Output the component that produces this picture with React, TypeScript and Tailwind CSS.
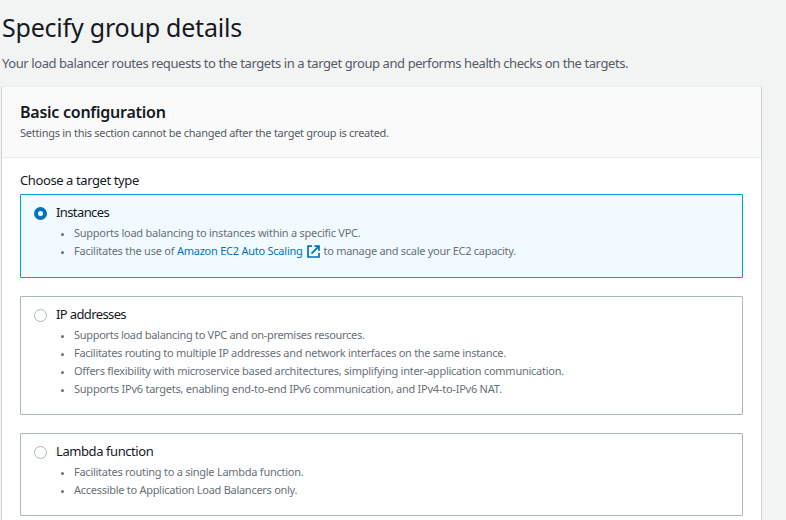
import React from "react";

type Line = { content: React.ReactNode; spacing: string };

function ExternalIcon() {
  return (
    <svg className="mr-[4px] ml-[4px] inline-block h-[13px] w-[13px] align-[-3px]" viewBox="0 0 13 13" fill="none" stroke="#0073bb" strokeWidth="1.7">
      <path d="M5 1.2H1v10.8h11V8" />
      <path d="M7.5 1.2H12v4.5M12 1.2 4.5 8.7" />
    </svg>
  );
}

function Radio({ selected }: { selected?: boolean }) {
  return selected ? (
    <span className="h-[13px] w-[13px] shrink-0 rounded-full border-4 border-[#0073bb] bg-white" />
  ) : (
    <span className="h-[13px] w-[13px] shrink-0 rounded-full border border-[#aab7b8] bg-white" />
  );
}

function Option({ title, titleSpacing, lines, selected, box }: { title: string; titleSpacing: string; lines: Line[]; selected?: boolean; box: string }) {
  return (
    <div className={`rounded-[1px] border pt-[9px] pl-[13px] ${box} ${selected ? "border-[#00a1c9] bg-[#f1faff]" : "border-[#aab7b8] bg-white"}`}>
      <div className="flex h-[18px] items-center gap-[9px]">
        <Radio selected={selected} />
        <span className={`mb-[2px] text-[13px] leading-[18px] whitespace-nowrap ${titleSpacing}`}>{title}</span>
      </div>
      <ul className="mt-[2px] text-[11px] leading-[18px] text-[#687078]">
        {lines.map((line, i) => (
          <li key={i} className="flex h-[18px] items-center pl-[27px] whitespace-nowrap">
            <span className="mt-[2px] mr-[10px] h-[3px] w-[3px] rounded-full bg-[#687078]" />
            <span className={line.spacing}>{line.content}</span>
          </li>
        ))}
      </ul>
    </div>
  );
}

export default function App() {
  return (
    <div className="h-[520px] w-[786px] overflow-hidden bg-[#f2f3f3] font-['Noto_Sans',sans-serif] text-[#16191f]">
      <header className="pt-[9px] pl-[2px] whitespace-nowrap">
        <h1 className="text-[25px] leading-[36px] tracking-[-0.22px]"><span>Specify group details</span></h1>
        <p className="mt-[9px] text-[13px] leading-[18px] tracking-[-0.42px] text-[#545b64]">
          <span>Your load balancer routes requests to the targets in a target group and performs health checks on the targets.</span>
        </p>
      </header>
      <main className="mt-[14px] ml-[1px] h-[440px] w-[761px] border border-[#cfd5d5] border-t-[#eaeded] bg-white">
        <div className="h-[71px] border-b border-[#eaeded] bg-[#fafafa] pt-[14px] pl-[18px] whitespace-nowrap">
          <h2 className="text-[16px] leading-[22px] font-semibold tracking-[-0.25px]"><span>Basic configuration</span></h2>
          <p className="mt-px text-[11px] leading-[18px] tracking-[-0.27px] text-[#545b64]"><span>Settings in this section cannot be changed after the target group is created.</span></p>
        </div>
        <div className="px-[18px] pt-[13px]">
          <p className="mb-[5px] text-[13px] leading-[18px] tracking-[-0.4px]"><span>Choose a target type</span></p>
          <div className="flex flex-col gap-[18px]">
            <Option selected box="h-[84px]" title="Instances" titleSpacing="tracking-[-0.6px]" lines={[
              { content: "Supports load balancing to instances within a specific VPC.", spacing: "tracking-[-0.25px]" },
              { content: <>Facilitates the use of <span className="text-[#0073bb]">Amazon EC2 Auto Scaling</span><ExternalIcon /><span className="tracking-[-0.29px]">to manage and scale your EC2 capacity.</span></>, spacing: "tracking-[-0.24px]" },
            ]} />
            <Option box="h-[119px]" title="IP addresses" titleSpacing="tracking-[-0.62px]" lines={[
              { content: "Supports load balancing to VPC and on-premises resources.", spacing: "tracking-[-0.3px]" },
              { content: "Facilitates routing to multiple IP addresses and network interfaces on the same instance.", spacing: "tracking-[-0.29px]" },
              { content: "Offers flexibility with microservice based architectures, simplifying inter-application communication.", spacing: "tracking-[-0.25px]" },
              { content: "Supports IPv6 targets, enabling end-to-end IPv6 communication, and IPv4-to-IPv6 NAT.", spacing: "tracking-[-0.24px]" },
            ]} />
            <Option box="h-[83px]" title="Lambda function" titleSpacing="tracking-[-0.42px]" lines={[
              { content: "Facilitates routing to a single Lambda function.", spacing: "tracking-[-0.26px]" },
              { content: "Accessible to Application Load Balancers only.", spacing: "tracking-[-0.28px]" },
            ]} />
          </div>
        </div>
      </main>
    </div>
  );
}
